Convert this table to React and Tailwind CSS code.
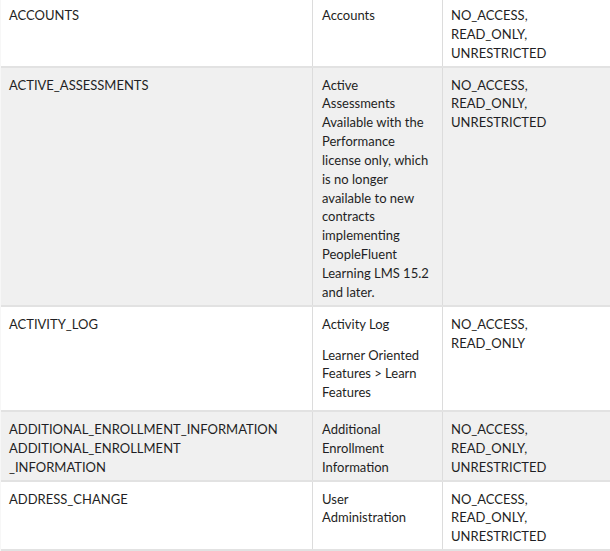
import React from 'react';

const rows = [
  {
    key: ['ACCOUNTS'],
    label: [['Accounts']],
    values: 'NO_ACCESS, READ_ONLY, UNRESTRICTED',
    shaded: false,
  },
  {
    key: ['ACTIVE_ASSESSMENTS'],
    label: [[
      'Active Assessments Available with the Performance license only, which is no longer available to new contracts implementing PeopleFluent Learning LMS 15.2 and later.',
    ]],
    values: 'NO_ACCESS, READ_ONLY, UNRESTRICTED',
    shaded: true,
  },
  {
    key: ['ACTIVITY_LOG'],
    label: [['Activity Log'], ['Learner Oriented Features > Learn Features']],
    values: 'NO_ACCESS, READ_ONLY',
    shaded: false,
  },
  {
    key: ['ADDITIONAL_ENROLLMENT_INFORMATION', 'ADDITIONAL_ENROLLMENT', '_INFORMATION'],
    label: [['Additional Enrollment Information']],
    values: 'NO_ACCESS, READ_ONLY, UNRESTRICTED',
    shaded: true,
  },
  {
    key: ['ADDRESS_CHANGE'],
    label: [['User Administration']],
    values: 'NO_ACCESS, READ_ONLY, UNRESTRICTED',
    shaded: false,
  },
];

export default function App() {
  return (
    <div
      className="w-[610px] h-[551px] overflow-hidden bg-white text-[#1f1f24] text-[13px] leading-[18.85px]"
      style={{ fontFamily: 'Lato, "Noto Sans", sans-serif' }}
    >
      <div className="border-l border-[#f7f7f7] -mt-[2px]">
        {rows.map((row, i) => (
          <div
            key={i}
            className={`grid grid-cols-[312px_130px_1fr] border-b-2 border-[#e2e2e2] ${row.shaded ? 'bg-[#f0f0f0]' : 'bg-white'}`}
          >
            <div className="border-r border-[#dcdcdc] pl-[8px] pr-[9px] pt-[8px] pb-[3px]">
              {row.key.map((k, j) => (
                <div key={j}>{k}</div>
              ))}
            </div>
            <div className="border-r border-[#dcdcdc] px-[9px] pt-[8px] pb-[3px]">
              {row.label.map((p, j) => (
                <p key={j} className={j > 0 ? 'mt-3 mb-[5px]' : ''}>
                  {p}
                </p>
              ))}
            </div>
            <div className="pl-[8px] pr-[9px] pt-[8px] pb-[3px]">
              <p className="w-[110px]">{row.values}</p>
            </div>
          </div>
        ))}
      </div>
    </div>
  );
}
